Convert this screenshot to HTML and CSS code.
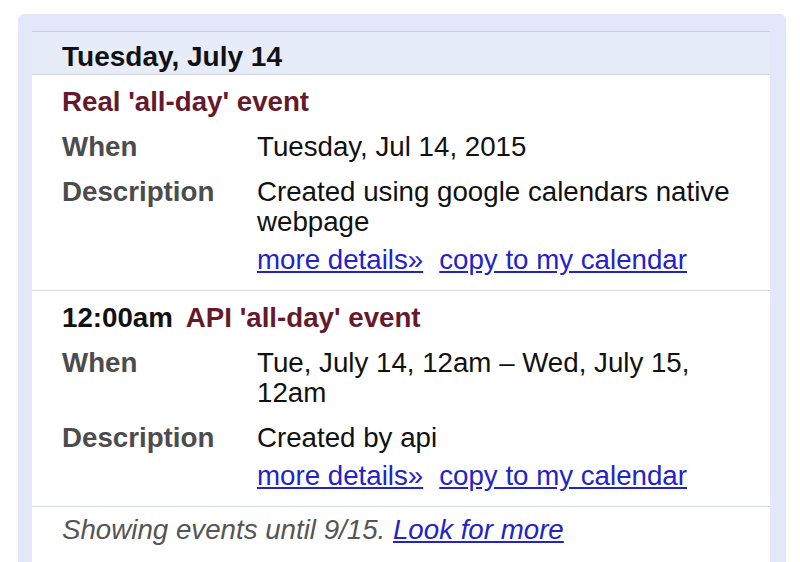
FILE: index.html
```html
<!DOCTYPE html>
<html>
<head>
<meta charset="utf-8">
<link rel="stylesheet" href="styles.css">
</head>
<body>
<div class="frame">
  <div class="panel">
    <div class="day-header">Tuesday, July 14</div>
    <div class="event">
      <div class="event-title"><span class="title">Real 'all-day' event</span></div>
      <div class="details">
        <div class="label">When</div>
        <div class="value">Tuesday, Jul 14, 2015</div>
        <div class="label">Description</div>
        <div class="value">Created using google calendars native webpage
          <div class="links"><a href="#">more details»</a><a href="#">copy to my calendar</a></div>
        </div>
      </div>
    </div>
    <div class="event">
      <div class="event-title"><span class="time">12:00am</span><span class="title">API 'all-day' event</span></div>
      <div class="details">
        <div class="label">When</div>
        <div class="value">Tue, July 14, 12am – Wed, July 15, 12am</div>
        <div class="label">Description</div>
        <div class="value">Created by api
          <div class="links"><a href="#">more details»</a><a href="#">copy to my calendar</a></div>
        </div>
      </div>
    </div>
    <div class="footer">Showing events until 9/15. <a href="#">Look for more</a></div>
  </div>
</div>
</body>
</html>
```
FILE: styles.css
```css
html, body {
  margin: 0;
  padding: 0;
  background: #ffffff;
  height: 100%;
  overflow: hidden;
}
body {
  font-family: "Liberation Sans", Arial, sans-serif;
  font-size: 27.7px;
  line-height: 30px;
  color: #111111;
}
.frame {
  margin: 14px 0 0 18px;
  width: 768px;
  height: 548px;
  box-sizing: border-box;
  padding: 17px 16px 0 14px;
  background: #e3e7f9;
  border-radius: 6px 6px 0 0;
}
.panel {
  background: #ffffff;
  height: 100%;
}
.day-header {
  background: #e6edf9;
  border-top: 1px solid #c9d0dc;
  border-bottom: 1px solid #cfd3da;
  padding: 10px 0 2px 30px;
  font-size: 28px;
  font-weight: bold;
  color: #111111;
}
.event {
  padding: 12px 0 15px 30px;
  border-bottom: 1px solid #d3d8de;
}
.event-title {
  font-weight: bold;
  display: flex;
  gap: 13px;
}
.time {
  color: #111111;
}
.title {
  color: #651a2c;
}
.details {
  display: grid;
  grid-template-columns: 195px 1fr;
  row-gap: 15px;
  margin-top: 15px;
}
.label {
  font-weight: bold;
  color: #4c4c4c;
}
.value {
  color: #111111;
  padding-right: 16px;
}
.links {
  display: flex;
  gap: 16px;
  margin-top: 8px;
}
a {
  color: #2323c8;
  text-decoration: underline;
}
.footer {
  padding: 8px 0 0 30px;
  font-style: italic;
  color: #555555;
}
```
